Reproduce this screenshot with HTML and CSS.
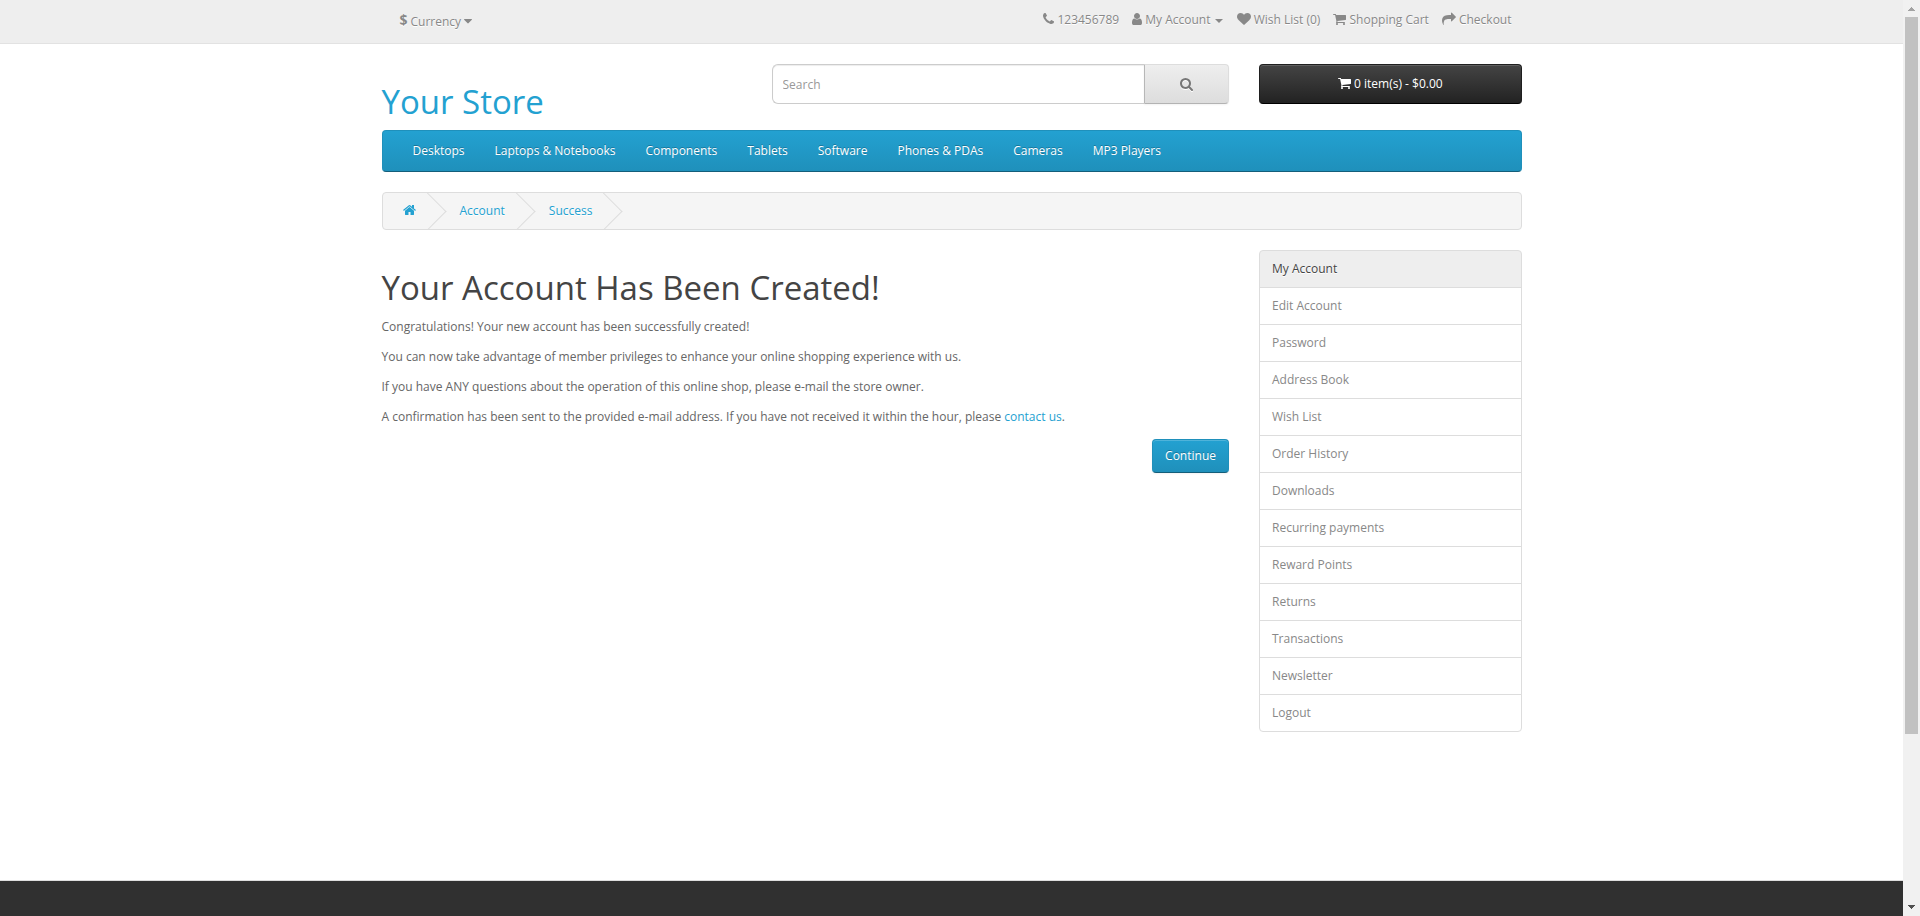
FILE: index.html
```html
<!DOCTYPE html>
<html lang="en">
<head>
<meta charset="utf-8">
<title>Your Account Has Been Created!</title>
<link rel="stylesheet" href="styles.css">
</head>
<body>
<svg class="sprite" aria-hidden="true">
  <symbol id="phone" viewBox="192 0 1408 1792"><path d="M1600 1240q0 27-10 70.5t-21 68.5q-21 50-122 106-94 51-186 51-27 0-53-3.5t-57.5-12.5-47-14.5-55.5-20.5-49-18q-98-35-175-83-127-79-264-216t-216-264q-48-77-83-175-3-9-18-49t-20.5-55.5-14.5-47-12.5-57.5-3.5-53q0-92 51-186 56-101 106-122 25-11 68.5-21t70.5-10q14 0 21 3 18 6 53 76 11 19 30 54t35 63.5 31 53.5q3 4 17.5 25t21.5 35.5 7 28.5q0 20-28.5 50t-62 55-62 53-28.5 46q0 9 5 22.5t8.5 20.5 14 24 11.5 19q76 137 174 235t235 174q2 1 19 11.5t24 14 20.5 8.5 22.5 5q18 0 46-28.5t53-62 55-62 50-28.5q14 0 28.5 7t35.5 21.5 25 17.5q25 15 53.5 31t63.5 35 54 30q70 35 76 53 3 7 3 21z"/></symbol>
  <symbol id="user" viewBox="256 0 1280 1792"><path d="M1536 1399q0 109-62.5 187t-150.5 78h-854q-88 0-150.5-78t-62.5-187q0-85 8.5-160.5t31.5-152 58.5-131 94-89 134.5-34.5q131 128 313 128t313-128q76 0 134.5 34.5t94 89 58.5 131 31.5 152 8.5 160.5zm-256-887q0 159-112.5 271.5t-271.5 112.5-271.5-112.5-112.5-271.5 112.5-271.5 271.5-112.5 271.5 112.5 112.5 271.5z"/></symbol>
  <symbol id="heart" viewBox="0 0 1792 1792"><path d="M896 1664q-26 0-44-18l-624-602q-10-8-27.5-26t-55.5-65.5-68-97.5-53.5-121-23.5-138q0-220 127-344t351-124q62 0 126.5 21.5t120 58 95.5 68.5 76 68q36-36 76-68t95.5-68.5 120-58 126.5-21.5q224 0 351 124t127 344q0 221-229 450l-623 600q-18 18-44 18z"/></symbol>
  <symbol id="cart" viewBox="64 0 1664 1792"><path d="M704 1536q0 52-38 90t-90 38-90-38-38-90 38-90 90-38 90 38 38 90zm896 0q0 52-38 90t-90 38-90-38-38-90 38-90 90-38 90 38 38 90zm128-1088v512q0 24-16.5 42.5t-40.5 21.5l-1044 122q13 60 13 70 0 16-24 64h920q26 0 45 19t19 45-19 45-45 19h-1024q-26 0-45-19t-19-45q0-11 8-31.5t16-36 21.5-40 15.5-29.5l-177-823h-204q-26 0-45-19t-19-45 19-45 45-19h256q16 0 28.5 6.5t19.5 15.5 13 24.5 8 26 5.5 29.5 4.5 26h1201q26 0 45 19t19 45z"/></symbol>
  <symbol id="share" viewBox="0 0 1792 1792"><path d="M1792 640q0 26-19 45l-512 512q-19 19-45 19t-45-19-19-45v-256h-224q-98 0-175.5 6t-154 21.5-133 42.5-105.5 69.5-80 101-48.5 138.5-17.5 181q0 55 5 123 0 6 2.5 23.5t2.5 26.5q0 15-8.5 25t-23.5 10q-16 0-28-17-7-9-13-22t-13.5-30-10.5-24q-127-285-127-451 0-199 53-333 162-403 875-403h224v-256q0-26 19-45t45-19 45 19l512 512q19 19 19 45z"/></symbol>
  <symbol id="search" viewBox="64 0 1664 1792"><path d="M1216 832q0-185-131.5-316.5t-316.5-131.5-316.5 131.5-131.5 316.5 131.5 316.5 316.5 131.5 316.5-131.5 131.5-316.5zm512 832q0 52-38 90t-90 38q-54 0-90-38l-343-342q-179 124-399 124-143 0-273.5-55.5t-225-150-150-225-55.5-273.5 55.5-273.5 150-225 225-150 273.5-55.5 273.5 55.5 225 150 150 225 55.5 273.5q0 220-124 399l343 343q37 37 37 90z"/></symbol>
  <symbol id="home" viewBox="64 0 1664 1792"><path d="M1472 992v480q0 26-19 45t-45 19h-384v-384h-256v384h-384q-26 0-45-19t-19-45v-480q0-1 .5-3t.5-3l575-474 575 474q1 2 1 6zm223-69l-62 74q-8 9-21 11h-3q-13 0-21-7l-692-577-692 577q-12 8-24 7-13-2-21-11l-62-74q-8-10-7-23.5t11-21.5l719-599q32-26 76-26t76 26l244 204v-195q0-14 9-23t23-9h192q14 0 23 9t9 23v408l219 182q10 8 11 21.5t-7 23.5z"/></symbol>
  <symbol id="caret" viewBox="384 0 1024 1792"><path d="M1408 704q0 26-19 45l-448 448q-19 19-45 19t-45-19l-448-448q-19-19-19-45t19-45 45-19h896q26 0 45 19t19 45z"/></symbol>
</svg>
<div class="window">
  <div class="page">
    <nav class="top">
      <div class="container top-inner">
        <a class="currency"><strong>$</strong><span>Currency</span><svg class="fa w8"><use href="#caret"/></svg></a>
        <ul class="top-links">
          <li><svg class="fa w11"><use href="#phone"/></svg> 123456789</li>
          <li><svg class="fa w10"><use href="#user"/></svg> My Account <span class="caret"></span></li>
          <li><svg class="fa w14"><use href="#heart"/></svg> Wish List (0)</li>
          <li><svg class="fa w13"><use href="#cart"/></svg> Shopping Cart</li>
          <li><svg class="fa w14"><use href="#share"/></svg> Checkout</li>
        </ul>
      </div>
    </nav>
    <header class="container header">
      <h1 class="logo">Your Store</h1>
      <div class="search">
        <input class="search-input" type="text" placeholder="Search">
        <button class="search-button"><svg class="fa w13"><use href="#search"/></svg></button>
      </div>
      <button class="cart-button"><svg class="fa w13"><use href="#cart"/></svg> 0 item(s) - $0.00</button>
    </header>
    <div class="container">
      <nav class="menu">
        <a>Desktops</a><a>Laptops &amp; Notebooks</a><a>Components</a><a>Tablets</a><a>Software</a><a>Phones &amp; PDAs</a><a>Cameras</a><a>MP3 Players</a>
      </nav>
      <ul class="breadcrumb">
        <li><svg class="fa w13"><use href="#home"/></svg></li>
        <li>Account</li>
        <li>Success</li>
      </ul>
      <div class="row">
        <main class="content">
          <h1>Your Account Has Been Created!</h1>
          <p>Congratulations! Your new account has been successfully created!</p>
          <p>You can now take advantage of member privileges to enhance your online shopping experience with us.</p>
          <p>If you have ANY questions about the operation of this online shop, please e-mail the store owner.</p>
          <p>A confirmation has been sent to the provided e-mail address. If you have not received it within the hour, please <a class="link">contact us</a>.</p>
          <div class="buttons"><a class="btn-primary">Continue</a></div>
        </main>
        <aside class="list-group">
          <a class="active">My Account</a>
          <a>Edit Account</a>
          <a>Password</a>
          <a>Address Book</a>
          <a>Wish List</a>
          <a>Order History</a>
          <a>Downloads</a>
          <a>Recurring payments</a>
          <a>Reward Points</a>
          <a>Returns</a>
          <a>Transactions</a>
          <a>Newsletter</a>
          <a>Logout</a>
        </aside>
      </div>
    </div>
    <footer class="footer"></footer>
  </div>
  <div class="scrollbar">
    <svg class="arrow" viewBox="0 0 17 17" shape-rendering="crispEdges"><path fill="#a3a3a3" d="M8 7h1v1h1v1h1v1h1v1H5v-1h1V9h1V8h1z"/></svg>
    <div class="track"><div class="thumb"></div></div>
    <svg class="arrow" viewBox="0 0 17 17" shape-rendering="crispEdges"><path fill="#505050" d="M5 6h7v1h-1v1h-1v1H9v1H8V9H7V8H6V7H5z"/></svg>
  </div>
</div>
</body>
</html>
```
FILE: styles.css
```css
* { box-sizing: border-box; }
html, body { height: 100%; }
body {
  margin: 0;
  overflow: hidden;
  background: #fff;
  color: #666;
  font: 400 12px/20px "Open Sans", sans-serif;
}
ul { list-style: none; margin: 0; padding: 0; }
button, input { font: inherit; }
.sprite { display: none; }
.window { display: flex; height: 100%; }
.page { flex: 1; display: flex; flex-direction: column; min-width: 0; }
.container { width: 1140px; margin: 0 auto; }

.fa { display: inline-block; height: 14px; vertical-align: -2px; fill: currentColor; overflow: visible; }
.w8 { width: 8px; }
.w10 { width: 10px; }
.w11 { width: 11px; }
.w13 { width: 13px; }
.w14 { width: 14px; }

.top {
  height: 44px;
  margin-bottom: 20px;
  background: #eee;
  border-bottom: 1px solid #e2e2e2;
  color: #888;
  text-shadow: 0 1px 0 #fff;
}
.top-inner { display: flex; justify-content: space-between; align-items: flex-start; }
.currency { display: flex; align-items: flex-start; padding: 11px 0 0 18px; }
.currency strong { font-size: 14px; line-height: 18px; }
.currency span { margin-left: 3px; line-height: 21px; }
.currency .fa { margin: 3px 0 0 3px; }
.top-links { display: flex; gap: 13px; padding: 10px 10px 0 0; }
.caret {
  display: inline-block;
  margin-left: 1px;
  margin-right: 1px;
  vertical-align: middle;
  border-top: 4px solid;
  border-left: 4px solid transparent;
  border-right: 4px solid transparent;
}

.header { display: grid; grid-template-columns: 390px 457.5px 262.5px; align-items: start; height: 66px; }
.header .cart-button { margin-left: 30px; width: 262.5px; }
h1 { margin: 20px 0 10px; color: #444; font-size: 33px; font-weight: 400; line-height: 36.3px; }
.logo { color: #23a1d1; }
.search { display: flex; height: 40px; }
.search-input {
  flex: 1;
  min-width: 0;
  padding: 2px 10px 0;
  border: 1px solid #ccc;
  border-right: 0;
  border-radius: 6px 0 0 6px;
  background: #fff;
  box-shadow: inset 0 1px 1px rgba(0, 0, 0, .075);
}
.search-input::placeholder { color: #999; }
.search-button {
  width: 85px;
  padding: 2px 0 0;
  border: 1px solid #ddd;
  border-color: #ddd #ddd #b3b3b3 #b7b7b7;
  border-radius: 0 4px 4px 0;
  background: linear-gradient(#eee, #ddd);
  color: #777;
  box-shadow: 0 1px 2px rgba(0, 0, 0, .05);
}
.search-button .fa { filter: drop-shadow(0 1px 0 #fff); }
.cart-button {
  height: 40px;
  padding: 0;
  border: 1px solid #222;
  border-color: #1f1f1f #1f1f1f #000;
  border-radius: 4px;
  background: linear-gradient(#444, #222);
  box-shadow: inset 0 1px 0 rgba(255, 255, 255, .15);
  color: #fff;
}

.menu {
  display: flex;
  height: 42px;
  margin-bottom: 20px;
  padding: 0 15px;
  border: 1px solid #1f90bb;
  border-bottom-color: #145e7a;
  border-radius: 4px;
  background: linear-gradient(#23a1d1, #1f90bb);
  color: #fff;
  text-shadow: 0 -1px 0 rgba(0, 0, 0, .25);
}
.menu a { padding: 10px 15px; }

.breadcrumb {
  display: flex;
  height: 38px;
  margin-bottom: 20px;
  padding: 8px 0;
  overflow: hidden;
  border: 1px solid #ddd;
  border-radius: 4px;
  background: #f5f5f5;
  color: #23a1d1;
  text-shadow: 0 1px 0 #fff;
}
.breadcrumb li { position: relative; padding: 0 20px; }
.breadcrumb li + li { padding-left: 24px; }
.breadcrumb li::after {
  content: "";
  position: absolute;
  top: -3px;
  right: -5px;
  width: 26px;
  height: 26px;
  border-right: 1px solid #ddd;
  border-bottom: 1px solid #ddd;
  transform: rotate(-45deg);
}

.row { display: flex; gap: 30px; align-items: flex-start; }
.content { flex: 1; }
.content h1 { margin-bottom: 11px; }
.content p { margin: 0 0 10px; }
.link { color: #23a1d1; }
.buttons { display: flex; justify-content: flex-end; margin-top: 12px; }
.btn-primary {
  padding: 6px 12px;
  border: 1px solid #1f90bb;
  border-bottom-color: #145e7a;
  border-radius: 4px;
  background: linear-gradient(#23a1d1, #1f90bb);
  box-shadow: inset 0 1px 0 rgba(255, 255, 255, .2), 0 1px 2px rgba(0, 0, 0, .05);
  color: #fff;
  text-shadow: 0 -1px 0 rgba(0, 0, 0, .25);
}

.list-group { width: 262.5px; }
.list-group a {
  display: block;
  height: 38px;
  margin-bottom: -1px;
  padding: 8px 12px;
  border: 1px solid #ddd;
  background: #fff;
  color: #888;
}
.list-group a:first-child { border-radius: 4px 4px 0 0; }
.list-group a:last-child { margin-bottom: 0; border-radius: 0 0 4px 4px; }
.list-group .active { background: #eee; color: #444; text-shadow: 0 1px 0 #fff; }

.footer { height: 36px; margin-top: auto; border-top: 1px solid #ddd; background: #303030; }

.scrollbar { display: flex; flex-direction: column; width: 17px; background: #f1f1f1; }
.arrow { display: block; width: 17px; height: 17px; }
.track { flex: 1; padding: 0 2px; }
.thumb { height: 717px; background: #c1c1c1; }
```
